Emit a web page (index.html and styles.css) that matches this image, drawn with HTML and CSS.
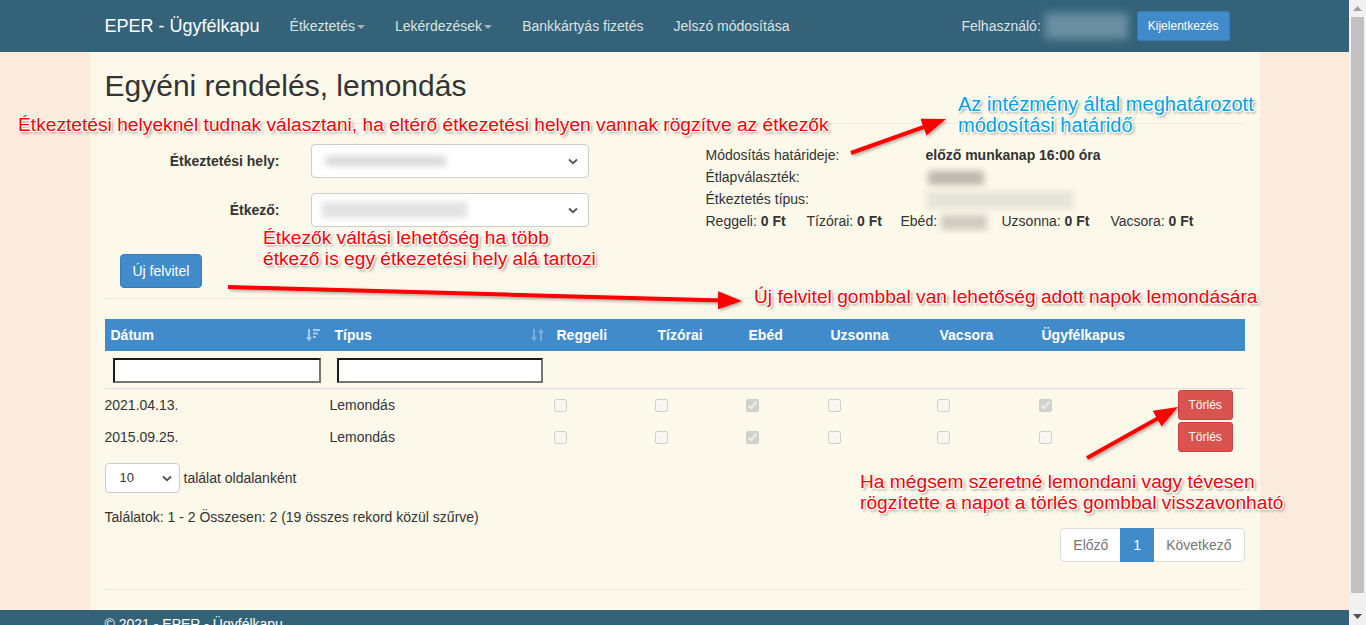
FILE: index.html
```html
<!DOCTYPE html>
<html lang="hu">
<head>
<meta charset="utf-8">
<title>EPER - Ügyfélkapu</title>
<link rel="stylesheet" href="styles.css">
</head>
<body>
<div class="page">
  <nav class="navbar">
    <div class="container nav-inner">
      <a class="brand">EPER - Ügyfélkapu</a>
      <a class="nav-link">Étkeztetés<span class="caret"></span></a>
      <a class="nav-link">Lekérdezések<span class="caret"></span></a>
      <a class="nav-link">Bankkártyás fizetés</a>
      <a class="nav-link">Jelszó módosítása</a>
      <div class="nav-right">
        <span class="nav-user">Felhasználó:</span>
        <span class="user-blur"></span>
        <button class="btn btn-primary btn-sm btn-logout">Kijelentkezés</button>
      </div>
    </div>
  </nav>

  <main class="container content">
    <h2 class="title">Egyéni rendelés, lemondás</h2>
    <hr class="rule rule-top">

    <div class="top-row">
      <div class="left-col">
        <div class="form-grid">
          <label class="form-label">Étkeztetési hely:</label>
          <div class="fake-select"><span class="blur blur-sel1"></span><svg class="chev" width="10" height="7" viewBox="0 0 10 7"><path d="M1 1.5 L5 5.2 L9 1.5" fill="none" stroke="#555" stroke-width="1.8"/></svg></div>
          <label class="form-label">Étkező:</label>
          <div class="fake-select"><span class="blur blur-sel2"></span><svg class="chev" width="10" height="7" viewBox="0 0 10 7"><path d="M1 1.5 L5 5.2 L9 1.5" fill="none" stroke="#555" stroke-width="1.8"/></svg></div>
        </div>
        <button class="btn btn-primary btn-new">Új felvitel</button>
      </div>

      <div class="info">
        <div class="info-grid">
          <span>Módosítás határideje:</span><b>előző munkanap 16:00 óra</b>
          <span>Étlapválaszték:</span><span><span class="blur blur-menu"></span></span>
          <span>Étkeztetés típus:</span><span><span class="blur blur-type"></span></span>
        </div>
        <div class="prices">
          <span>Reggeli: <b>0 Ft</b></span>
          <span>Tízórai: <b>0 Ft</b></span>
          <span>Ebéd: <span class="blur blur-ebed"></span></span>
          <span>Uzsonna: <b>0 Ft</b></span>
          <span>Vacsora: <b>0 Ft</b></span>
        </div>
      </div>
    </div>

    <hr class="rule rule-mid">

    <table class="grid">
      <colgroup>
        <col class="c-date"><col class="c-type"><col class="c-reg"><col class="c-tiz"><col class="c-ebed"><col class="c-uzs"><col class="c-vac"><col class="c-ugy"><col class="c-act">
      </colgroup>
      <thead>
        <tr class="head">
          <th><div class="th-flex"><span>Dátum</span>
            <svg class="sort-icon" width="14" height="16" viewBox="0 0 14 16"><g fill="#a8cbec"><rect x="2" y="2" width="2" height="9"/><path d="M0 10 H6 L3 14.5 Z"/><rect x="7" y="2" width="7" height="2"/><rect x="7" y="5.5" width="5" height="2"/><rect x="7" y="9" width="3" height="2"/></g></svg></div></th>
          <th><div class="th-flex"><span>Típus</span>
            <svg class="sort-icon" width="14" height="16" viewBox="0 0 14 16"><g fill="#79ade0"><rect x="2" y="2" width="2" height="9"/><path d="M0 10 H6 L3 14.5 Z"/><rect x="9" y="5" width="2" height="9"/><path d="M7 6 H13 L10 1.5 Z"/></g></svg></div></th>
          <th>Reggeli</th>
          <th>Tízórai</th>
          <th>Ebéd</th>
          <th>Uzsonna</th>
          <th>Vacsora</th>
          <th>Ügyfélkapus</th>
          <th></th>
        </tr>
        <tr class="filters">
          <th><input type="text" class="filter-input"></th>
          <th><input type="text" class="filter-input"></th>
          <th></th><th></th><th></th><th></th><th></th><th></th><th></th>
        </tr>
      </thead>
      <tbody>
        <tr>
          <td>2021.04.13.</td>
          <td class="t-type">Lemondás</td>
          <td class="cb"><input type="checkbox" disabled></td>
          <td class="cb"><input type="checkbox" disabled></td>
          <td class="cb"><input type="checkbox" disabled checked></td>
          <td class="cb"><input type="checkbox" disabled></td>
          <td class="cb"><input type="checkbox" disabled></td>
          <td class="cb"><input type="checkbox" disabled checked></td>
          <td><button class="btn btn-danger btn-sm">Törlés</button></td>
        </tr>
        <tr>
          <td>2015.09.25.</td>
          <td class="t-type">Lemondás</td>
          <td class="cb"><input type="checkbox" disabled></td>
          <td class="cb"><input type="checkbox" disabled></td>
          <td class="cb"><input type="checkbox" disabled checked></td>
          <td class="cb"><input type="checkbox" disabled></td>
          <td class="cb"><input type="checkbox" disabled></td>
          <td class="cb"><input type="checkbox" disabled></td>
          <td><button class="btn btn-danger btn-sm">Törlés</button></td>
        </tr>
      </tbody>
    </table>

    <div class="length">
      <div class="len-select"><span>10</span><svg class="chev" width="10" height="7" viewBox="0 0 10 7"><path d="M1 1.5 L5 5.2 L9 1.5" fill="none" stroke="#555" stroke-width="1.8"/></svg></div>
      <span class="len-label">találat oldalanként</span>
    </div>
    <div class="info-line">Találatok: 1 - 2 Összesen: 2 (19 összes rekord közül szűrve)</div>
    <div class="pager">
      <span class="pg pg-first">Előző</span><span class="pg pg-active">1</span><span class="pg pg-last">Következő</span>
    </div>
    <hr class="rule rule-bottom">
  </main>

  <footer class="footer"><div class="container footer-inner">© 2021 - EPER - Ügyfélkapu</div></footer>

  <div class="annotations">
    <svg class="arrows" width="1349" height="625" viewBox="0 0 1349 625">
      <defs>
        <marker id="ah" markerUnits="userSpaceOnUse" markerWidth="24" markerHeight="18" refX="14" refY="9" orient="auto">
          <path d="M0 0 L24 9 L0 18 Z" fill="#ff0000"/>
        </marker>
        <filter id="sh" x="-10%" y="-50%" width="120%" height="200%">
          <feDropShadow dx="1.5" dy="1.5" stdDeviation="1.5" flood-color="#000" flood-opacity="0.35"/>
        </filter>
      </defs>
      <g filter="url(#sh)" stroke="#ff0000" stroke-width="4" fill="none">
        <line x1="851" y1="153" x2="936.6" y2="122.4" marker-end="url(#ah)"/>
        <line x1="228" y1="287" x2="732" y2="300.7" marker-end="url(#ah)"/>
        <line x1="1087" y1="458" x2="1169.3" y2="411.9" marker-end="url(#ah)"/>
      </g>
    </svg>
    <div class="note note-1">Étkeztetési helyeknél tudnak választani, ha eltérő étkezetési helyen vannak rögzítve az étkezők</div>
    <div class="note note-blue">Az intézmény által meghatározott<br>módosítási határidő</div>
    <div class="note note-3">Étkezők váltási lehetőség ha több<br>étkező is egy étkezetési hely alá tartozi</div>
    <div class="note note-4">Új felvitel gombbal van lehetőség adott napok lemondására</div>
    <div class="note note-5">Ha mégsem szeretné lemondani vagy tévesen<br>rögzítette a napot a törlés gombbal visszavonható</div>
  </div>
</div>

<div class="scrollbar">
  <div class="sb-btn"><svg width="9" height="5" viewBox="0 0 9 5"><path d="M0 5 L4.5 0 L9 5 Z" fill="#a3a3a3"/></svg></div>
  <div class="sb-track"><div class="sb-thumb"></div></div>
  <div class="sb-btn"><svg width="9" height="5" viewBox="0 0 9 5"><path d="M0 0 L4.5 5 L9 0 Z" fill="#505050"/></svg></div>
</div>
</body>
</html>
```

FILE: styles.css
```css
* { box-sizing: border-box; }

html, body {
  margin: 0;
  height: 625px;
  overflow: hidden;
}

body {
  display: flex;
  font-family: "Liberation Sans", Arial, Helvetica, sans-serif;
  font-size: 14px;
  line-height: 20px;
  color: #333;
}

.page {
  position: relative;
  flex: 1;
  min-width: 0;
  height: 625px;
  overflow: hidden;
  background: #fbebdc;
  display: flex;
  flex-direction: column;
}

.container {
  width: 1170px;
  margin: 0 auto;
}

/* navbar */
.navbar {
  flex: none;
  height: 52px;
  background: #346379;
}
.nav-inner {
  display: flex;
  align-items: center;
  height: 100%;
}
.brand {
  padding: 0 15px;
  font-size: 18px;
  line-height: 20px;
  color: #fff;
}
.nav-link {
  padding: 0 15px;
  color: #dde2e5;
}
.caret {
  display: inline-block;
  width: 0;
  height: 0;
  margin-left: 2px;
  vertical-align: middle;
  border-top: 4px solid #a9b4ba;
  border-left: 4px solid transparent;
  border-right: 4px solid transparent;
}
.nav-right {
  margin-left: auto;
  margin-right: 30px;
  display: flex;
  align-items: center;
}
.nav-user { color: #dde2e5; }
.user-blur {
  width: 83px;
  height: 26px;
  margin-left: 4px;
  background: #6a8fa2;
  filter: blur(4px);
}
.btn {
  font-family: inherit;
  cursor: pointer;
  border: 1px solid transparent;
  border-radius: 4px;
  padding: 6px 12px;
  font-size: 14px;
  line-height: 20px;
}
.btn-primary {
  background: #428bca;
  border-color: #357ebd;
  color: #fff;
}
.btn-danger {
  background: #d9534f;
  border-color: #d43f3a;
  color: #fff;
}
.btn-sm {
  padding: 5px 10px;
  font-size: 12px;
  line-height: 18px;
  border-radius: 3px;
}
.btn-logout { margin-left: 9px; }

/* content */
.content {
  flex: none;
  display: flow-root;
  padding: 0 15px;
  background: #fcf9ea;
}
.title {
  margin: 17px 0 0;
  font-size: 30px;
  line-height: 33px;
  font-weight: normal;
  color: #333;
}
.rule {
  border: 0;
  border-top: 1px solid #ebe9e0;
  margin: 0;
  height: 0;
}
.rule-top { margin-top: 21px; }
.rule-mid { margin-top: 10px; }
.rule-bottom { margin-top: 27px; margin-bottom: 20px; }

.top-row {
  display: flex;
  margin-top: 20px;
}
.left-col {
  flex: none;
  width: 601px;
}
.form-grid {
  display: grid;
  grid-template-columns: 175px 278px;
  column-gap: 31px;
  row-gap: 15px;
  align-items: center;
}
.form-label {
  text-align: right;
  font-weight: bold;
}
.fake-select {
  height: 34px;
  border: 1px solid #ccc;
  border-radius: 4px;
  background: #fff;
  display: flex;
  align-items: center;
  justify-content: space-between;
  padding: 0 10px 0 10px;
}
.blur {
  display: inline-block;
  vertical-align: middle;
  filter: blur(3px);
}
.blur-sel1 { width: 120px; height: 10px; margin-left: 4px; background: #d9d9d9; }
.blur-sel2 { width: 145px; height: 16px; background: #e2e2e2; }
.blur-menu { width: 56px; height: 14px; margin-left: 2px; background: #bdb8ad; }
.blur-type { width: 148px; height: 18px; background: #e6e3da; }
.blur-ebed { width: 46px; height: 15px; background: #cfcbc1; }

.btn-new {
  display: block;
  margin: 27px 0 0 15px;
}

.info { flex: 1; }
.info-grid {
  display: grid;
  grid-template-columns: 220px auto;
  line-height: 22px;
}
.prices {
  display: grid;
  grid-template-columns: 101px 94px 101px 109px auto;
  line-height: 22px;
}

/* table */
.grid {
  margin-top: 20px;
  width: 1140px;
  table-layout: fixed;
  border-collapse: separate;
  border-spacing: 0;
}
.c-date { width: 224px; }
.c-type { width: 222px; }
.c-reg { width: 101px; }
.c-tiz { width: 91px; }
.c-ebed { width: 82px; }
.c-uzs { width: 109px; }
.c-vac { width: 102px; }
.c-ugy { width: 132px; }
.c-act { width: 77px; }

.head th {
  background: #428bca;
  color: #fff;
  font-weight: bold;
  text-align: left;
  padding: 6px 6px;
  line-height: 20px;
}
.th-flex {
  display: flex;
  align-items: center;
  justify-content: space-between;
}
.head th:first-child { padding-right: 9px; }
.sort-icon { display: block; }

.filters th {
  padding: 7px 8px 5px;
  border-bottom: 1px solid #dddddd;
}
.filter-input {
  display: block;
  width: 100%;
  height: 25px;
  margin: 0;
  padding: 1px 2px;
  background: #fff;
  border: 2px solid;
  border-color: #1b1b1b #767676 #767676 #1b1b1b;
  font: inherit;
}
.grid td {
  padding: 1px 0;
  height: 32px;
  vertical-align: middle;
}
.grid td.t-type { padding-left: 1px; }
.grid td.cb { padding-left: 3px; }
.cb input {
  display: block;
  margin: 0;
  width: 13px;
  height: 13px;
}
.grid td .btn-danger { margin-left: 10px; display: block; }

/* bottom controls */
.length {
  display: flex;
  align-items: center;
  margin-top: 10px;
}
.len-select {
  width: 75px;
  height: 30px;
  border: 1px solid #ccc;
  border-radius: 4px;
  background: #fff;
  display: flex;
  align-items: center;
  justify-content: space-between;
  padding: 0 7px 0 14px;
  font-size: 13px;
}
.len-label { margin-left: 4px; }
.info-line { margin-top: 14px; }
.pager {
  display: flex;
  justify-content: flex-end;
  margin-top: 1px;
}
.pg {
  padding: 6px 12px;
  line-height: 20px;
  border: 1px solid #ddd;
  background: #fff;
  color: #777;
  margin-left: -1px;
}
.pg-first { border-radius: 4px 0 0 4px; margin-left: 0; }
.pg-last { border-radius: 0 4px 4px 0; }
.pg-active {
  background: #428bca;
  border-color: #428bca;
  color: #fff;
  position: relative;
}

/* footer */
.footer {
  flex: none;
  height: 60px;
  background: #346379;
  color: #fff;
  padding-top: 4px;
}
.footer-inner { padding: 0 15px; }

/* annotations layer */
.annotations {
  position: absolute;
  left: 0;
  top: 0;
  width: 1349px;
  height: 625px;
  pointer-events: none;
}
.arrows {
  position: absolute;
  left: 0;
  top: 0;
}
.note {
  position: absolute;
  white-space: nowrap;
  font-size: 19.2px;
  line-height: 21px;
  color: #ff0000;
  text-shadow:
    -1px -1px 0 #fff, 0 -1px 0 #fff, 1px -1px 0 #fff, 1px 0 0 #fff,
    1px 1px 0 #fff, 0 1px 0 #fff, -1px 1px 0 #fff, -1px 0 0 #fff,
    2px 2px 3px rgba(0, 0, 0, 0.45);
}
.note-1 { left: 18px; top: 114px; }
.note-blue {
  left: 958px;
  top: 94px;
  font-size: 20px;
  color: #00a2e8;
}
.note-3 { left: 263px; top: 227px; }
.note-4 { left: 754px; top: 286px; }
.note-5 { left: 860px; top: 471px; }

/* fake window scrollbar */
.scrollbar {
  flex: none;
  width: 17px;
  height: 625px;
  background: #f1f1f1;
  display: flex;
  flex-direction: column;
}
.sb-btn {
  flex: none;
  height: 17px;
  display: flex;
  align-items: center;
  justify-content: center;
}
.sb-track {
  flex: 1;
  padding: 0 2px;
}
.sb-thumb {
  height: 576px;
  background: #c1c1c1;
}
```
